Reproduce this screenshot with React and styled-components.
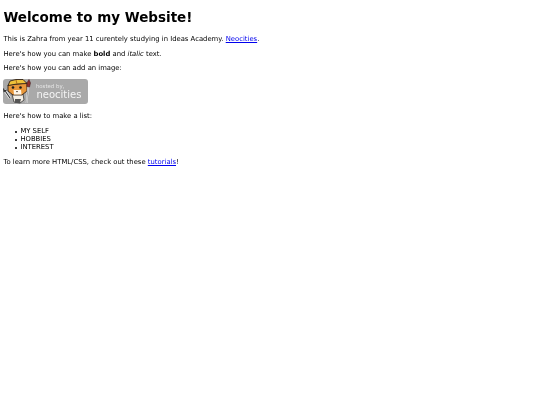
import React from 'react';
import styled, { createGlobalStyle } from 'styled-components';

const GlobalStyle = createGlobalStyle`
  html, body {
    margin: 0;
    background: #ffffff;
  }
  body {
    font-family: "DejaVu Sans", Verdana, sans-serif;
    font-size: 6.83px;
    line-height: 7.85px;
    color: #000000;
  }
`;

const Page = styled.main`
  padding: 3.4px;
  filter: blur(0.2px);
`;

const Title = styled.h1`
  margin: 6.6px 0 10.5px;
  font-size: 13.5px;
  line-height: 15.7px;
  font-weight: 700;
`;

const Para = styled.p`
  margin: 0 0 6.75px;
`;

const Link = styled.a`
  color: #0000ee;
  text-decoration: underline;
`;

const Badge = styled.a`
  display: block;
  position: relative;
  width: 85px;
  height: 25px;
  margin-top: -1px;
  margin-bottom: 9.5px;
  border-radius: 3px;
  background: #a9a9a9;
  overflow: hidden;
  text-decoration: none;
`;

const BadgeArt = styled.svg`
  display: block;
  width: 34px;
  height: 25px;
`;

const BadgeSmall = styled.span`
  position: absolute;
  left: 32.5px;
  top: 4px;
  font-size: 5.4px;
  line-height: 7px;
  color: #e6e6e6;
`;

const BadgeBig = styled.span`
  position: absolute;
  left: 33px;
  top: 9.5px;
  font-size: 10px;
  line-height: 14px;
  color: #f4f4f4;
`;

const List = styled.ul`
  margin: 0 0 7.25px;
  padding-left: 17px;
  list-style: none;
`;

const Item = styled.li`
  position: relative;

  &::before {
    content: "";
    position: absolute;
    left: -5.5px;
    top: 3px;
    width: 2px;
    height: 2px;
    border-radius: 50%;
    background: #000000;
  }
`;

const Cat = () => (
  <BadgeArt viewBox="0 0 34 25">
    {/* wrench */}
    <path d="M1.5 11 L7 19" stroke="#f4f4f4" strokeWidth="2.6" fill="none" />
    <path d="M1.5 11 L7 19 M0.5 9.5 L1 12.5 L3.5 11" stroke="#333" strokeWidth="1.1" fill="none" />
    {/* body */}
    <path d="M9 15 L20 15 L21 21 L17 24 L11 23 Z" fill="#f4efe6" stroke="#333" strokeWidth="0.8" />
    <path d="M12 20 L18 20 L17 24 L12 24 Z" fill="#555" />
    {/* face */}
    <path d="M5 6 L24 4 L24 12 L19 16 L10 16 L5 12 Z" fill="#e8973a" stroke="#33241a" strokeWidth="0.9" />
    <path d="M10.5 11 L18 11 L18.5 15.5 L11 15.5 Z" fill="#fff6e8" />
    {/* helmet */}
    <path d="M5 6.5 L7 2 L13 0.5 L20 0.5 L24 4.5 L14 5 Z" fill="#efc23a" stroke="#33241a" strokeWidth="0.9" />
    <path d="M13 1 L14 5" stroke="#a8641a" strokeWidth="0.9" />
    {/* eyes */}
    <circle cx="10" cy="8.5" r="1.3" fill="#1c1c1c" />
    <circle cx="17.5" cy="8.5" r="1.3" fill="#1c1c1c" />
    <path d="M13 12 L15 12 L14 13.5 Z" fill="#33241a" />
    {/* brush */}
    <path d="M25.2 7 L23.6 24" stroke="#f6f6f6" strokeWidth="1.7" />
    <path d="M25.2 7 L23.6 24" stroke="#333" strokeWidth="0.4" />
    <path d="M26 0.5 L27.5 4 L26.5 8 L23.8 7.5 L24.2 3.5 Z" fill="#8e2f2f" stroke="#3a1a1a" strokeWidth="0.5" />
  </BadgeArt>
);

const App = () => (
  <>
    <GlobalStyle />
    <Page>
      <Title>Welcome to my Website!</Title>
      <Para>
        This is Zahra from year 11 curentely studying in Ideas Academy. <Link href="#">Neocities</Link>.
      </Para>
      <Para>
        Here's how you can make <b>bold</b> and <i>italic</i> text.
      </Para>
      <Para>Here's how you can add an image:</Para>
      <Badge href="#">
        <Cat />
        <BadgeSmall>hosted by,</BadgeSmall>
        <BadgeBig>neocities</BadgeBig>
      </Badge>
      <Para>Here's how to make a list:</Para>
      <List>
        <Item>MY SELF</Item>
        <Item>HOBBIES</Item>
        <Item>INTEREST</Item>
      </List>
      <Para>
        To learn more HTML/CSS, check out these <Link href="#">tutorials</Link>!
      </Para>
    </Page>
  </>
);

export default App;
